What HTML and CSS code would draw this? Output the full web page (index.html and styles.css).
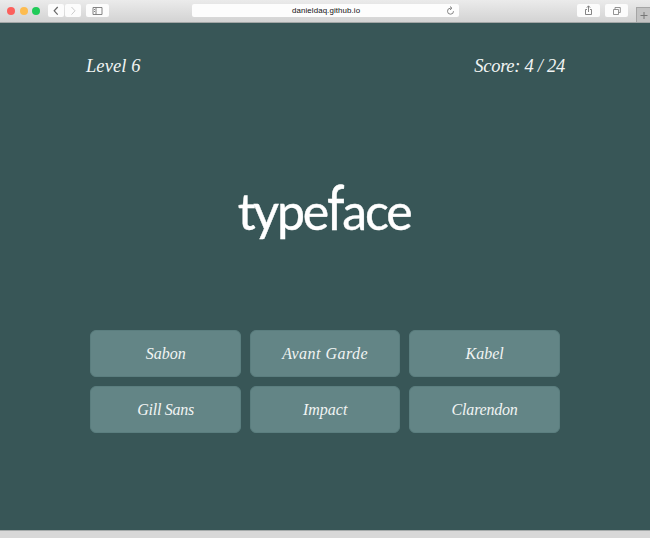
FILE: index.html
```html
<!DOCTYPE html>
<html lang="en">
<head>
<meta charset="utf-8">
<title>Typeface</title>
<link rel="stylesheet" href="styles.css">
</head>
<body>
<header class="toolbar">
  <div class="lights"><i class="red"></i><i class="yellow"></i><i class="green"></i></div>
  <div class="history">
    <span class="tool nav"><svg width="16" height="13" viewBox="0 0 16 13"><path d="M9.7 3 6.2 6.8l3.5 3.8" stroke="#666" stroke-width="1.2"/></svg></span>
    <span class="tool nav"><svg width="16" height="13" viewBox="0 0 16 13"><path d="m6.5 3 3.5 3.8-3.5 3.8" stroke="#ccc" stroke-width="1"/></svg></span>
  </div>
  <span class="tool"><svg width="23" height="13" viewBox="0 0 23 13"><path d="M7 3.5h9v7H7zM10 3.5v7M8 5.5h1M8 7.5h1" stroke="#777" stroke-width=".9"/></svg></span>
  <div class="address"><span>danieldaq.github.io</span><svg class="reload" width="9" height="10" viewBox="0 0 9 10"><path d="M5 2.2H4.4a3 3 0 1 0 3.1 3M4 .5l2 1.7-2 1.7" stroke="#777" stroke-width=".9"/></svg></div>
  <span class="tool share"><svg width="23" height="13" viewBox="0 0 23 13"><path d="M10 5.5H8.5v5h6v-5H13M11.5 8V2M9.8 3.7l1.7-1.9 1.7 1.9" stroke="#777" stroke-width=".9"/></svg></span>
  <span class="tool tabs"><svg width="23" height="13" viewBox="0 0 23 13"><path d="M8.5 5.5h5v5h-5zM10 5.5v-2h5.3v5h-1.8" stroke="#888" stroke-width=".9"/></svg></span>
  <span class="new-tab"><svg width="14" height="15" viewBox="0 0 14 15"><path d="M3.5 7.5h7M7 4v7" stroke="#777" stroke-width="1"/></svg></span>
</header>
<main class="game">
  <div class="status"><span class="level">Level 6</span><span class="score">Score: 4 / 24</span></div>
  <h1 class="sample">type<span class="tall">f</span>ace</h1>
  <div class="choices">
    <button><span>Sabon</span></button>
    <button><span class="avant">Avant Garde</span></button>
    <button><span>Kabel</span></button>
    <button><span class="gill">Gill Sans</span></button>
    <button><span>Impact</span></button>
    <button><span class="clarendon">Clarendon</span></button>
  </div>
</main>
<footer class="edge"></footer>
</body>
</html>
```

FILE: styles.css
```css
* { box-sizing: border-box; }
body {
  margin: 0;
  width: 650px;
  height: 538px;
  display: flex;
  flex-direction: column;
  overflow: hidden;
  background: #385657;
}
svg { display: block; fill: none; }
.toolbar {
  height: 23px;
  flex: none;
  display: flex;
  align-items: flex-start;
  padding: 4px 0 0 7px;
  background: linear-gradient(#ebebeb, #d3d3d3);
  border-bottom: 1px solid #a2a6a6;
}
.lights { display: flex; gap: 4.5px; padding-top: 3px; width: 41px; }
.lights i { width: 8px; height: 8px; border-radius: 50%; }
.red { background: #fc605c; }
.yellow { background: #fdbc50; }
.green { background: #20cb58; }
.history { display: flex; gap: 1px; margin-right: 5px; }
.tool { height: 13px; width: 23px; background: #fcfcfc; border-radius: 2px; }
.nav { width: 16px; }
.address {
  width: 267px;
  height: 13px;
  margin-left: 83px;
  background: #fdfdfd;
  border-radius: 2px;
  display: flex;
  align-items: center;
  justify-content: flex-end;
  padding-right: 4px;
  font: 7.9px/15px "Liberation Sans", Arial, sans-serif;
  letter-spacing: .1px;
  color: #111;
}
.address span { width: 69px; margin-right: 85px; white-space: nowrap; }
.share { margin-left: 118px; }
.tabs { margin-left: 5px; }
.new-tab {
  width: 14px;
  height: 15px;
  margin: 3px 0 0 8px;
  background: #c3c3c3;
  border: solid #a5a5a5;
  border-width: 1px 0 0 1px;
}
.game {
  height: 507px;
  flex: none;
  color: #fff;
  font-family: "Liberation Serif", "Times New Roman", serif;
  font-style: italic;
}
.status {
  display: flex;
  justify-content: space-between;
  padding: 31px 85px 0 86px;
  height: 101px;
  font-size: 18.5px;
  line-height: 24px;
  color: #f1f4f3;
  white-space: nowrap;
}
.score { letter-spacing: -.28px; }
.level { letter-spacing: .08px; }
.sample {
  margin: 0;
  padding: 52px 2px 0 0;
  height: 206px;
  text-align: center;
  font: normal 400 50px/70px Lato, sans-serif;
  letter-spacing: -2.2px;
  -webkit-text-stroke: .4px #fff;
}
.tall { display: inline-block; transform: scaleY(1.25); transform-origin: 50% 53px; }
.choices {
  display: grid;
  grid-template-columns: repeat(3, 150.5px);
  grid-auto-rows: 47px;
  gap: 9.5px 9px;
  margin: -.4px 0 0 90.4px;
}
button {
  font: inherit;
  font-size: 16px;
  line-height: 20px;
  color: #f1f4f3;
  background: #638586;
  border: 1px solid #5b7e7f;
  border-radius: 6px;
  padding: 1px 0 0;
}
.avant { letter-spacing: .48px; }
.gill { letter-spacing: -.25px; }
.clarendon { letter-spacing: -.2px; }
.edge { flex: 1; background: #d8d8d8; border-top: 1px solid #a5aaaa; }
```
